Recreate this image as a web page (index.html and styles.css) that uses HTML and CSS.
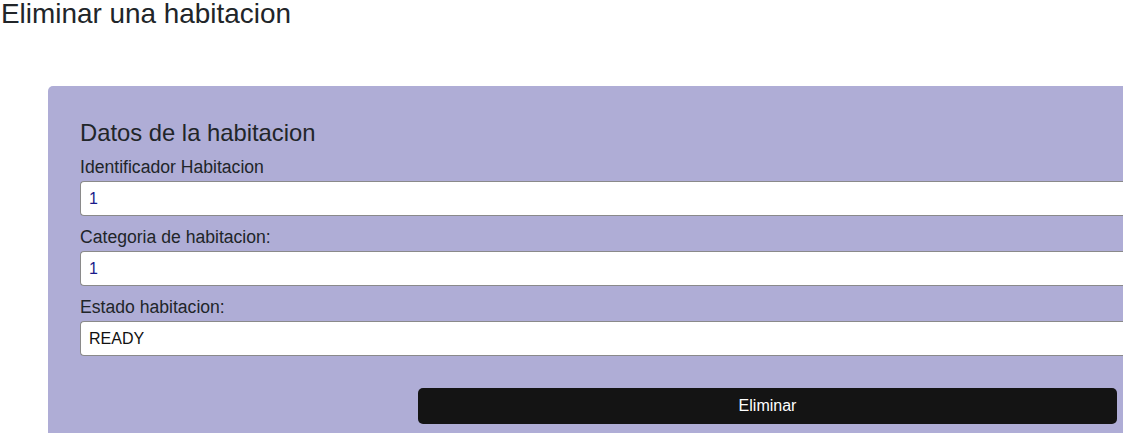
FILE: index.html
```html
<!DOCTYPE html>
<html lang="es">
<head>
<meta charset="utf-8">
<title>Eliminar una habitacion</title>
<link rel="stylesheet" href="styles.css">
</head>
<body>
<h3 class="page-title">Eliminar una habitacion</h3>
<div class="card">
  <h4 class="card-title">Datos de la habitacion</h4>
  <form class="form">
    <label class="label" for="id">Identificador Habitacion</label>
    <input class="field num" id="id" type="text" value="1" readonly>
    <label class="label gap" for="cat">Categoria de habitacion:</label>
    <input class="field num" id="cat" type="text" value="1" readonly>
    <label class="label gap" for="est">Estado habitacion:</label>
    <input class="field" id="est" type="text" value="READY" readonly>
    <div class="actions">
      <button class="btn" type="button">Eliminar</button>
    </div>
  </form>
</div>
</body>
</html>
```
FILE: styles.css
```css
html, body {
  margin: 0;
  padding: 0;
  overflow: hidden;
  background: #ffffff;
}
body {
  font-family: "Liberation Sans", Arial, sans-serif;
  color: #212529;
  width: 1123px;
  height: 433px;
}
.page-title {
  margin: 0;
  padding-left: 1px;
  font-size: 27.9px;
  font-weight: 400;
  line-height: 28px;
}
.card {
  box-sizing: border-box;
  margin-top: 58px;
  margin-left: 48px;
  width: 1075px;
  height: 347px;
  background: #afadd6;
  border-top-left-radius: 5px;
  padding: 35px 0 0 32px;
}
.card-title {
  margin: 0 0 13px 0;
  font-size: 23.8px;
  font-weight: 400;
  line-height: 24px;
}
.form {
  display: flex;
  flex-direction: column;
}
.label {
  display: block;
  font-size: 17.6px;
  line-height: 19px;
  margin-bottom: 4px;
}
.label.gap {
  margin-top: 12px;
}
.field {
  box-sizing: border-box;
  height: 35px;
  width: 100%;
  border: 1px solid #8a8a8a;
  border-right: none;
  border-radius: 4px 0 0 4px;
  background: #ffffff;
  padding: 0 8px;
  font-family: "Liberation Sans", Arial, sans-serif;
  font-size: 16px;
  color: #111111;
  outline: none;
}
.field.num {
  color: #1a1a8a;
}
.actions {
  margin-top: 32px;
  padding-left: 338px;
}
.btn {
  width: 699px;
  height: 36px;
  background: #141414;
  color: #ffffff;
  border: none;
  border-radius: 5px;
  font-family: "Liberation Sans", Arial, sans-serif;
  font-size: 16px;
}
```
